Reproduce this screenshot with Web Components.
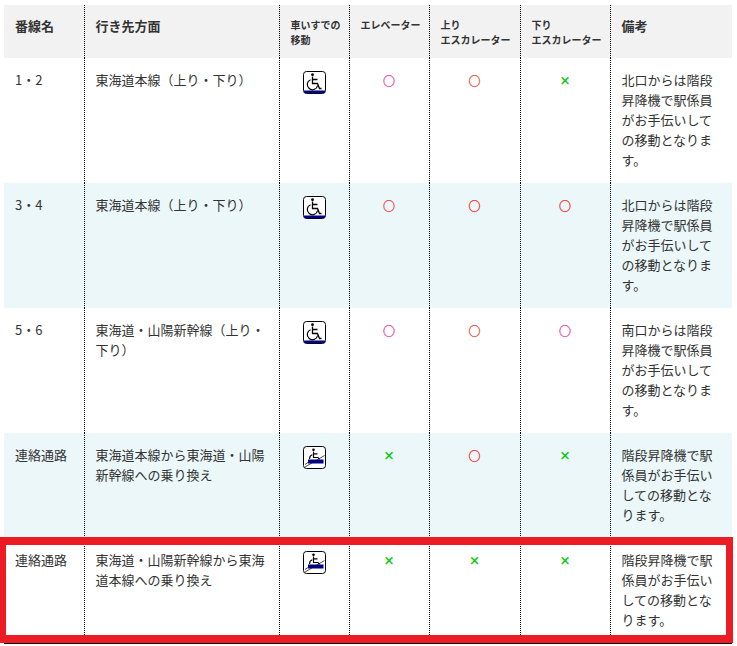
<!DOCTYPE html>
<html lang="ja"><head><meta charset="utf-8"><style>
html,body{margin:0;padding:0;background:#fff}
body{width:737px;height:646px;overflow:hidden;position:relative;font-family:"Noto Sans CJK JP","Noto Sans",sans-serif;color:#333}
</style></head><body>
<station-table>
<t-row head>
 <t-cell big>番線名</t-cell><t-cell big>行き先方面</t-cell><t-cell small>車いすでの<br>移動</t-cell><t-cell small>エレベーター</t-cell><t-cell small>上り<br>エスカレーター</t-cell><t-cell small>下り<br>エスカレーター</t-cell><t-cell big>備考</t-cell>
</t-row>
<t-row h="125">
 <t-cell>1・2</t-cell><t-cell>東海道本線（上り・下り）</t-cell><t-cell mark><wheel-icon></wheel-icon></t-cell><t-cell mark><m-o c="#e82c9c">○</m-o></t-cell><t-cell mark><m-o c="#d8401c">○</m-o></t-cell><t-cell mark><m-x>×</m-x></t-cell><t-cell>北口からは階段昇降機で駅係員がお手伝いしての移動となります。</t-cell>
</t-row>
<t-row h="125" tint>
 <t-cell>3・4</t-cell><t-cell>東海道本線（上り・下り）</t-cell><t-cell mark><wheel-icon></wheel-icon></t-cell><t-cell mark><m-o c="#f4302c">○</m-o></t-cell><t-cell mark><m-o>○</m-o></t-cell><t-cell mark><m-o>○</m-o></t-cell><t-cell>北口からは階段昇降機で駅係員がお手伝いしての移動となります。</t-cell>
</t-row>
<t-row h="125">
 <t-cell>5・6</t-cell><t-cell>東海道・山陽新幹線（上り・下り）</t-cell><t-cell mark><wheel-icon></wheel-icon></t-cell><t-cell mark><m-o c="#e82c9c">○</m-o></t-cell><t-cell mark><m-o c="#d8401c">○</m-o></t-cell><t-cell mark><m-o c="#e82c9c">○</m-o></t-cell><t-cell>南口からは階段昇降機で駅係員がお手伝いしての移動となります。</t-cell>
</t-row>
<t-row h="105" tint>
 <t-cell>連絡通路</t-cell><t-cell>東海道本線から東海道・山陽新幹線への乗り換え</t-cell><t-cell mark><lift-icon></lift-icon></t-cell><t-cell mark><m-x>×</m-x></t-cell><t-cell mark><m-o>○</m-o></t-cell><t-cell mark><m-x>×</m-x></t-cell><t-cell>階段昇降機で駅係員がお手伝いしての移動となります。</t-cell>
</t-row>
<t-row h="106" last>
 <t-cell>連絡通路</t-cell><t-cell>東海道・山陽新幹線から東海道本線への乗り換え</t-cell><t-cell mark><lift-icon></lift-icon></t-cell><t-cell mark><m-x>×</m-x></t-cell><t-cell mark><m-x>×</m-x></t-cell><t-cell mark><m-x>×</m-x></t-cell><t-cell>階段昇降機で駅係員がお手伝いしての移動となります。</t-cell>
</t-row>
</station-table>
<red-frame></red-frame>
<script>
function def(name,html,setup){
  customElements.define(name,class extends HTMLElement{
    constructor(){super();this.attachShadow({mode:'open'}).innerHTML=html;}
    connectedCallback(){setup&&setup(this)}
  });
}
def('station-table',`<style>:host{display:block;width:728px;margin:5px 0 0 4px}</style><slot></slot>`);
def('t-row',`<style>
:host{display:grid;grid-template-columns:80px 195px 70px 80px 91px 90px 122px;background:#fff;box-sizing:border-box}
:host([tint]){background:#ebf7f9}
:host([head]){background:#f2f2f2;height:53px}
:host([last]){border-bottom:1px solid #000}
</style><slot></slot>`,el=>{ if(el.hasAttribute('h')) el.style.height=el.getAttribute('h')+'px';
  [...el.children].forEach((c,i)=>{ if(i>0) c.setAttribute('div',''); });});
def('t-cell',`<style>
:host{display:block;box-sizing:border-box;padding:12px 11px 0;font-size:13px;line-height:20px;color:#333;min-width:0;word-break:break-all}
:host([div]){border-left:1px dotted #000;padding-left:10.5px}
:host([big]){font-weight:700;padding-top:11px}
:host([small]){font-size:10px;font-weight:700;line-height:15px;padding-top:12px;white-space:nowrap;padding-right:0}
:host([mark]){text-align:center;padding:13px 1px 0 0;line-height:16px}
</style><slot></slot>`);
def('m-o',`<style>:host{display:inline-block;font-size:12px;font-weight:700;line-height:20px;height:20px;vertical-align:top;-webkit-text-stroke:.25px currentColor}</style><slot></slot>`,el=>{el.style.color=el.getAttribute('c')||'#f81414'});
def('m-x',`<style>:host{display:inline-block;font-size:11px;font-weight:700;line-height:18px;height:18px;vertical-align:top;color:#00c800;-webkit-text-stroke:.3px currentColor}</style><slot></slot>`);
def('wheel-icon',`<style>:host{display:inline-block;width:23px;height:23px;margin-right:-1px}svg{display:block}</style><svg width="23" height="23" viewBox="0 0 23 23"><rect x=".5" y=".5" width="22" height="22" rx="3" fill="#fff" stroke="#000"/><path d="M1 19.5h21v.8a2 2 0 0 1-2 2H3a2 2 0 0 1-2-2z" fill="#000080"/><circle cx="9.5" cy="3.7" r="1.4"/><path d="M9.5 5.5v7h5l2 5h2M9.5 8.5h5" fill="none" stroke="#000" stroke-width="1.3"/><path d="M7.6 8.7A5.2 5.2 0 1 0 14.6 14.5" fill="none" stroke="#000" stroke-width="1.2"/></svg>`);
def('lift-icon',`<style>:host{display:inline-block;width:23px;height:23px;margin-right:-1px}svg{display:block}</style><svg width="23" height="23" viewBox="0 0 23 23"><rect x=".5" y=".5" width="22" height="22" rx="3" fill="#fff" stroke="#000"/><circle cx="10.5" cy="3.8" r="1.3"/><path d="M10.5 5.5v6.5M10.5 7.8h4M6.5 13c0-2.3 1.3-3.8 2.8-4.3M10.5 11.5h4.5l1.5 2" fill="none" stroke="#000" stroke-width="1.2"/><rect x="5" y="13.5" width="15.5" height="4" fill="#000090"/><path d="M2 21 21.5 9.5M2 18.5 5 16.5" fill="none" stroke="#000" stroke-width=".7"/></svg>`);
def('red-frame',`<style>:host{position:absolute;left:0;top:537px;width:733px;height:106px;box-sizing:border-box;border:solid #ed1c24;border-width:8px 7px 8px 6px}</style>`);
</script>
</body></html>
